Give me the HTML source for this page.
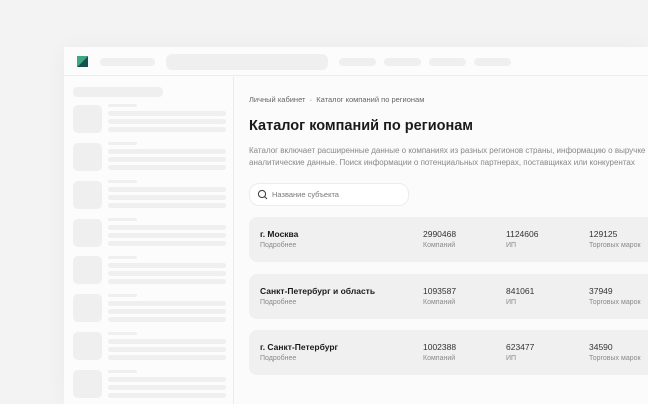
<!DOCTYPE html>
<html style="width:648px;height:404px;overflow:hidden"><head><meta charset="utf-8"><style>
*{margin:0;padding:0;box-sizing:border-box}
body{width:648px;height:404px;overflow:hidden;background:#f3f3f3;font-family:"Liberation Sans","Noto Sans CJK SC",sans-serif;position:relative}
.a{position:absolute}
.win{left:64px;top:47px;width:584px;height:357px;background:#fbfbfb;box-shadow:0 0 20px rgba(0,0,0,.04)}
.hdr{left:64px;top:47px;width:584px;height:29px;border-bottom:1px solid #ececec;background:#fcfcfc}
.side{left:64px;top:77px;width:170px;height:327px;border-right:1px solid #ebebeb;background:#fcfcfc}
.p{background:#efefef;border-radius:4px}
.t{color:#1a1a1a}
.card{left:249px;width:399px;height:45px;background:#f0f0f0;border-radius:8px 0 0 8px}
.card .n{position:absolute;left:11px;top:12px;font-size:8.5px;font-weight:bold;color:#1a1a1a}
.card .s{position:absolute;top:25px;font-size:7px;color:#8a8a8a}
.card .v{position:absolute;top:12px;font-size:8.5px;color:#333}
</style></head><body>
<div class="a win"></div>
<div class="a hdr"></div>
<svg class="a" style="left:77px;top:56px" width="11" height="11"><polygon points="0,0 11,0 0,11" fill="#3da882"/><polygon points="11,0 11,11 0,11" fill="#16504f"/></svg>
<div class="a p" style="left:100px;top:58px;width:55px;height:8px"></div>
<div class="a p" style="left:166px;top:54px;width:162px;height:16px;border-radius:6px"></div>
<div class="a p" style="left:339px;top:58px;width:37px;height:8px"></div>
<div class="a p" style="left:384px;top:58px;width:37px;height:8px"></div>
<div class="a p" style="left:429px;top:58px;width:37px;height:8px"></div>
<div class="a p" style="left:474px;top:58px;width:37px;height:8px"></div>
<div class="a side"></div>
<div class="a p" style="left:73px;top:87px;width:90px;height:10px"></div>
<div class="a" style="left:249px;top:95px;font-size:7.5px;color:#666">Личный кабинет &nbsp;·&nbsp; Каталог компаний по регионам</div>
<div class="a t" style="left:249px;top:118px;font-size:14.5px;font-weight:bold">Каталог компаний по регионам</div>
<div class="a" style="left:249px;top:145px;font-size:8px;color:#888;line-height:12px;white-space:nowrap">Каталог включает расширенные данные о компаниях из разных регионов страны, информацию о выручке<br>аналитические данные. Поиск информации о потенциальных партнерах, поставщиках или конкурентах</div>
<div class="a" style="left:249px;top:183px;width:160px;height:23px;background:#fff;border:1px solid #ececec;border-radius:10px"></div>
<svg class="a" style="left:257px;top:189px" width="11" height="11"><circle cx="5" cy="5" r="3.6" fill="none" stroke="#444" stroke-width="1.1"/><line x1="7.6" y1="7.6" x2="10" y2="10" stroke="#444" stroke-width="1.1"/></svg>
<div class="a" style="left:272px;top:190px;font-size:7.5px;color:#777">Название субъекта</div>

<div class="a card" style="top:217px"><div class="n">г. Москва</div><div class="s" style="left:11px">Подробнее</div><div class="v" style="left:174px">2990468</div><div class="s" style="left:174px">Компаний</div><div class="v" style="left:257px">1124606</div><div class="s" style="left:257px">ИП</div><div class="v" style="left:340px">129125</div><div class="s" style="left:340px">Торговых марок</div></div>
<div class="a card" style="top:274px"><div class="n">Санкт-Петербург и область</div><div class="s" style="left:11px">Подробнее</div><div class="v" style="left:174px">1093587</div><div class="s" style="left:174px">Компаний</div><div class="v" style="left:257px">841061</div><div class="s" style="left:257px">ИП</div><div class="v" style="left:340px">37949</div><div class="s" style="left:340px">Торговых марок</div></div>
<div class="a card" style="top:330px"><div class="n">г. Санкт-Петербург</div><div class="s" style="left:11px">Подробнее</div><div class="v" style="left:174px">1002388</div><div class="s" style="left:174px">Компаний</div><div class="v" style="left:257px">623477</div><div class="s" style="left:257px">ИП</div><div class="v" style="left:340px">34590</div><div class="s" style="left:340px">Торговых марок</div></div>

<div class="a p" style="left:73px;top:105px;width:29px;height:28px;border-radius:5px"></div><div class="a p" style="left:108px;top:104px;width:29px;height:3px"></div><div class="a p" style="left:108px;top:111px;width:118px;height:5px"></div><div class="a p" style="left:108px;top:119px;width:118px;height:5px"></div><div class="a p" style="left:108px;top:127px;width:118px;height:5px"></div>
<div class="a p" style="left:73px;top:143px;width:29px;height:28px;border-radius:5px"></div><div class="a p" style="left:108px;top:142px;width:29px;height:3px"></div><div class="a p" style="left:108px;top:149px;width:118px;height:5px"></div><div class="a p" style="left:108px;top:157px;width:118px;height:5px"></div><div class="a p" style="left:108px;top:165px;width:118px;height:5px"></div>
<div class="a p" style="left:73px;top:181px;width:29px;height:28px;border-radius:5px"></div><div class="a p" style="left:108px;top:180px;width:29px;height:3px"></div><div class="a p" style="left:108px;top:187px;width:118px;height:5px"></div><div class="a p" style="left:108px;top:195px;width:118px;height:5px"></div><div class="a p" style="left:108px;top:203px;width:118px;height:5px"></div>
<div class="a p" style="left:73px;top:219px;width:29px;height:28px;border-radius:5px"></div><div class="a p" style="left:108px;top:218px;width:29px;height:3px"></div><div class="a p" style="left:108px;top:225px;width:118px;height:5px"></div><div class="a p" style="left:108px;top:233px;width:118px;height:5px"></div><div class="a p" style="left:108px;top:241px;width:118px;height:5px"></div>
<div class="a p" style="left:73px;top:256px;width:29px;height:28px;border-radius:5px"></div><div class="a p" style="left:108px;top:256px;width:29px;height:3px"></div><div class="a p" style="left:108px;top:263px;width:118px;height:5px"></div><div class="a p" style="left:108px;top:271px;width:118px;height:5px"></div><div class="a p" style="left:108px;top:279px;width:118px;height:5px"></div>
<div class="a p" style="left:73px;top:294px;width:29px;height:28px;border-radius:5px"></div><div class="a p" style="left:108px;top:294px;width:29px;height:3px"></div><div class="a p" style="left:108px;top:301px;width:118px;height:5px"></div><div class="a p" style="left:108px;top:309px;width:118px;height:5px"></div><div class="a p" style="left:108px;top:317px;width:118px;height:5px"></div>
<div class="a p" style="left:73px;top:332px;width:29px;height:28px;border-radius:5px"></div><div class="a p" style="left:108px;top:332px;width:29px;height:3px"></div><div class="a p" style="left:108px;top:339px;width:118px;height:5px"></div><div class="a p" style="left:108px;top:347px;width:118px;height:5px"></div><div class="a p" style="left:108px;top:355px;width:118px;height:5px"></div>
<div class="a p" style="left:73px;top:370px;width:29px;height:28px;border-radius:5px"></div><div class="a p" style="left:108px;top:370px;width:29px;height:3px"></div><div class="a p" style="left:108px;top:377px;width:118px;height:5px"></div><div class="a p" style="left:108px;top:385px;width:118px;height:5px"></div><div class="a p" style="left:108px;top:393px;width:118px;height:5px"></div>
</body></html>
